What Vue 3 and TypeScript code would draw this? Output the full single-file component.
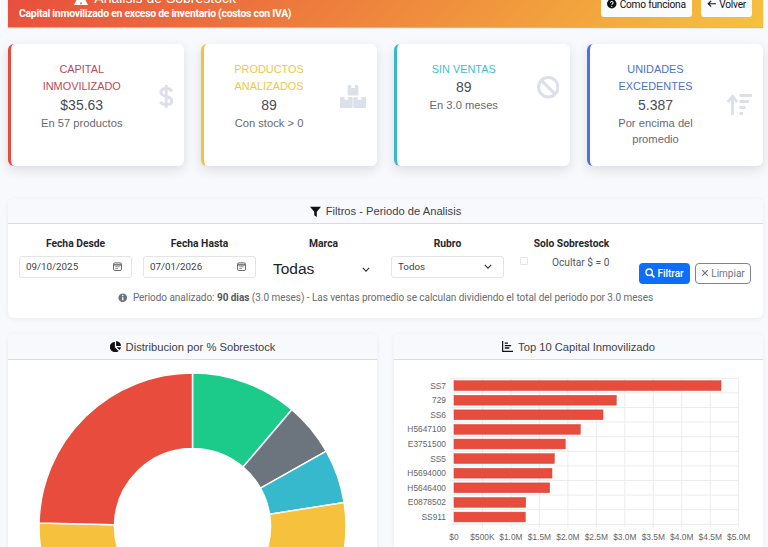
<script setup lang="ts">
interface Stat { title: string; value: string; sub: string; tone: string; icon: string }
const stats: Stat[] = [
  { title: 'CAPITAL INMOVILIZADO', value: '$35.63', sub: 'En 57 productos', tone: 'red', icon: 'dollar' },
  { title: 'PRODUCTOS ANALIZADOS', value: '89', sub: 'Con stock > 0', tone: 'yellow', icon: 'boxes' },
  { title: 'SIN VENTAS', value: '89', sub: 'En 3.0 meses', tone: 'cyan', icon: 'ban' },
  { title: 'UNIDADES EXCEDENTES', value: '5.387', sub: 'Por encima del promedio', tone: 'blue', icon: 'sort' },
]

const cx = 192.5, cy = 526.5, R = 153.5, r = 78
const pt = (rad: number, deg: number) => {
  const a = (deg * Math.PI) / 180
  return `${(cx + rad * Math.sin(a)).toFixed(2)} ${(cy - rad * Math.cos(a)).toFixed(2)}`
}
const seg = (a: number, b: number) => {
  const large = b - a > 180 ? 1 : 0
  return `M${pt(R, a)}A${R} ${R} 0 ${large} 1 ${pt(R, b)}L${pt(r, b)}A${r} ${r} 0 ${large} 0 ${pt(r, a)}Z`
}
const segments = [
  { d: seg(0, 40.4), c: '#1ccb8a' },
  { d: seg(40.4, 60.6), c: '#6c757d' },
  { d: seg(60.6, 81), c: '#36b9cc' },
  { d: seg(81, 271.3), c: '#f6c23e' },
  { d: seg(271.3, 360), c: '#e74c3c' },
]

const x0 = 454, x1 = 738.7, y0 = 378.3, rowH = 14.6
const bars = [
  ['SS7', 721], ['729', 616.3], ['SS6', 603], ['H5647100', 580.3], ['E3751500', 565.3],
  ['SS5', 554.3], ['H5694000', 552], ['H5646400', 549.7], ['E0878502', 525.7], ['SS911', 525.3],
].map(([label, end], i) => ({ label: label as string, end: end as number, y: y0 + rowH * i }))
const ticks = ['$0', '$500K', '$1.0M', '$1.5M', '$2.0M', '$2.5M', '$3.0M', '$3.5M', '$4.0M', '$4.5M', '$5.0M']
  .map((label, i) => ({ label, x: x0 + ((x1 - x0) * i) / 10 }))
const rows = Array.from({ length: 11 }, (_, i) => y0 + rowH * i)
</script>

<template>
  <div class="page">
    <header class="hero">
      <div class="hero-text">
        <h1>
          <svg class="warn" viewBox="0 0 14 14"><path fill="#fff" fill-rule="evenodd" d="M7 0l7 14H0zM6.2 11.6h1.6v1.6H6.2z" /></svg>
          Analisis de Sobrestock
        </h1>
        <p>Capital inmovilizado en exceso de inventario (costos con IVA)</p>
      </div>
      <div class="hero-actions">
        <button class="light">
          <svg viewBox="0 0 16 16" class="ic"><circle cx="8" cy="8" r="8" fill="#111" /><path d="M5.8 6.2a2.2 2.2 0 1 1 3.4 1.9c-.8.5-1.2.9-1.2 1.6" fill="none" stroke="#fff" stroke-width="1.7" /><circle cx="8" cy="12.3" r="1.1" fill="#fff" /></svg>
          Como funciona
        </button>
        <button class="light">
          <svg viewBox="0 0 16 16" class="ic"><path d="M15 8H2M7 3L2 8l5 5" fill="none" stroke="#111" stroke-width="1.8" /></svg>
          Volver
        </button>
      </div>
    </header>

    <section class="stats">
      <article v-for="s in stats" :key="s.title" class="stat" :class="s.tone">
        <div class="stat-row">
          <div class="stat-text">
            <h2>{{ s.title }}</h2>
            <div class="value">{{ s.value }}</div>
            <div class="sub">{{ s.sub }}</div>
          </div>
          <svg v-if="s.icon === 'dollar'" class="si" width="14.5" height="25" viewBox="0 0 14.5 25">
            <path d="M7.25 1v23" stroke="#dddfeb" stroke-width="2.8" />
            <path d="M13 7.5C11.8 5.3 9.8 4.6 7.2 4.6 4 4.6 1.9 6 1.9 8.3c0 5.4 10.9 3 10.9 8.6 0 2.4-2.2 3.7-5.5 3.7-2.6 0-4.800-.8-6-2.900" fill="none" stroke="#dddfeb" stroke-width="3" />
          </svg>
          <svg v-else-if="s.icon === 'boxes'" class="si" width="26" height="23" viewBox="0 0 26 23">
            <path fill="#dddfeb" d="M8.800 0h2.500v3h3.600V0h2.300a1.200 1.200 0 0 1 1.200 1.200v8.100a1.200 1.200 0 0 1-1.200 1.200H8.800a1.200 1.200 0 0 1-1.200-1.200V1.200A1.200 1.200 0 0 1 8.800 0z" />
            <path fill="#dddfeb" d="M1.200 12h3.300v3h3.600v-3h3.300a1.200 1.200 0 0 1 1.200 1.200v8.600a1.200 1.200 0 0 1-1.200 1.200H1.200A1.200 1.200 0 0 1 0 21.800v-8.600A1.200 1.200 0 0 1 1.200 12z" />
            <path fill="#dddfeb" d="M14.500 12h3.300v3h3.600v-3h3.400a1.200 1.200 0 0 1 1.200 1.200v8.600a1.200 1.200 0 0 1-1.200 1.200H14.500a1.200 1.200 0 0 1-1.200-1.200v-8.600a1.200 1.200 0 0 1 1.200-1.200z" />
          </svg>
          <svg v-else-if="s.icon === 'ban'" class="si" width="22.500" height="22.500" viewBox="0 0 22 22">
            <circle cx="11" cy="11" r="9.500" fill="none" stroke="#dddfeb" stroke-width="3" />
            <path d="M4.500 4.500l13 13" stroke="#dddfeb" stroke-width="3" />
          </svg>
          <svg v-else class="si" width="25" height="21" viewBox="0 0 25 21">
            <path d="M5.500 21V3M0.800 8l4.700-5.500L10.200 8" fill="none" stroke="#dddfeb" stroke-width="2.800" />
            <path d="M12.500 1.500H25M12.500 7.500H22M12.500 13.500H18.500M12.500 19.500H16" stroke="#dddfeb" stroke-width="2.800" />
          </svg>
        </div>
      </article>
    </section>

    <section class="card filters">
      <div class="card-head">
        <svg viewBox="0 0 12 12" class="hi"><path d="M0 .8h12L7.400 6.400V12L4.600 10V6.400z" fill="#111" /></svg>
        Filtros - Periodo de Analisis
      </div>
      <div class="filter-body">
        <div class="filter-grid">
          <div class="field">
            <label>Fecha Desde</label>
            <div class="control"><span>09/10/2025</span>
              <svg viewBox="0 0 10 10" class="cal"><rect x=".6" y="1" width="8.800" height="8.400" rx="1.400" fill="none" stroke="#555" stroke-width="1" /><path d="M1 3.200h8" stroke="#555" stroke-width="1.400" /><path d="M2.500 5.300h5M2.500 7.300h3" stroke="#777" stroke-width=".9" /></svg>
            </div>
          </div>
          <div class="field">
            <label>Fecha Hasta</label>
            <div class="control"><span>07/01/2026</span>
              <svg viewBox="0 0 10 10" class="cal"><rect x=".6" y="1" width="8.800" height="8.400" rx="1.400" fill="none" stroke="#555" stroke-width="1" /><path d="M1 3.200h8" stroke="#555" stroke-width="1.400" /><path d="M2.500 5.300h5M2.500 7.300h3" stroke="#777" stroke-width=".9" /></svg>
            </div>
          </div>
          <div class="field">
            <label>Marca</label>
            <div class="control bare"><span>Todas</span>
              <svg viewBox="0 0 10 6" class="chev"><path d="M1 1l4 4 4-4" fill="none" stroke="#333" stroke-width="1.400" /></svg>
            </div>
          </div>
          <div class="field">
            <label>Rubro</label>
            <div class="control"><span>Todos</span>
              <svg viewBox="0 0 10 6" class="chev"><path d="M1 1l4 4 4-4" fill="none" stroke="#333" stroke-width="1.400" /></svg>
            </div>
          </div>
          <div class="field">
            <label>Solo Sobrestock</label>
            <div class="check"><input type="checkbox" /><span>Ocultar $ = 0</span></div>
          </div>
          <div class="actions">
            <button class="primary">
              <svg viewBox="0 0 12 12" class="bi"><circle cx="5" cy="5" r="3.800" fill="none" stroke="#fff" stroke-width="1.700" /><path d="M8 8l3.300 3.300" stroke="#fff" stroke-width="2" /></svg>
              Filtrar
            </button>
            <button class="outline">
              <svg viewBox="0 0 10 10" class="bi x"><path d="M1.500 1.500l7 7M8.500 1.500l-7 7" stroke="#6c757d" stroke-width="1.500" /></svg>
              Limpiar
            </button>
          </div>
        </div>
        <p class="note">
          <svg viewBox="0 0 12 12" class="ni"><circle cx="6" cy="6" r="5.500" fill="#6c757d" /><path d="M6 5.400v3.600" stroke="#fff" stroke-width="1.600" /><circle cx="6" cy="3.300" r="1" fill="#fff" /></svg>
          Periodo analizado: <strong>90 dias</strong> (3.0 meses) - Las ventas promedio se calculan dividiendo el total del periodo por 3.0 meses
        </p>
      </div>
    </section>

    <section class="charts">
      <div class="card chart">
        <div class="card-head tall">
          <svg viewBox="0 0 12 12" class="hi pie"><path fill="#111" d="M5.300.8v5.900l4 4.100A5.700 5.700 0 1 1 5.300.8zM6.700 0A5.400 5.400 0 0 1 12 5.400H6.700zM7.300 6.700H12a5.500 5.500 0 0 1-1.700 3.200z" /></svg>
          Distribucion por % Sobrestock
        </div>
        <svg class="plot" viewBox="8 360 369 320" width="369" height="320">
          <path v-for="(p, i) in segments" :key="i" :d="p.d" :fill="p.c" stroke="#fff" stroke-width="1.500" />
        </svg>
      </div>
      <div class="card chart">
        <div class="card-head tall">
          <svg viewBox="0 0 12 12" class="hi"><path d="M.7 0v11.300H12" fill="none" stroke="#111" stroke-width="1.300" /><path d="M3 2.300h3.500M3 5h7M3 7.700h5" stroke="#111" stroke-width="1.500" /></svg>
          Top 10 Capital Inmovilizado
        </div>
        <svg class="plot" viewBox="394 360 369 320" width="369" height="320">
          <line v-for="t in ticks" :key="t.label" :x1="t.x" :x2="t.x" :y1="y0" y2="527.500" class="grid" />
          <line v-for="(y, i) in rows" :key="i" x1="449.500" :x2="x1" :y1="y" :y2="y" class="grid" />
          <g v-for="b in bars" :key="b.label">
            <rect :x="x0" :y="b.y + 2.400" :width="b.end - x0" height="9.800" fill="#e74c3c" stroke="#d8463a" stroke-width=".5" />
            <text :x="446" :y="b.y + 10.300" text-anchor="end" class="tick">{{ b.label }}</text>
          </g>
          <text v-for="t in ticks" :key="'x' + t.label" :x="t.x" y="539.800" text-anchor="middle" class="tick">{{ t.label }}</text>
        </svg>
      </div>
    </section>
  </div>
</template>

<style>
html, body { height: 547px; overflow: hidden; background: #f8f9fc; }
</style>

<style scoped>
.page {
  padding: 0 5px 0 8px;
  font-family: "Liberation Sans", Arial, sans-serif;
  color: #333;
}
button { font-family: Roboto, "Liberation Sans", sans-serif; cursor: pointer; }

.hero {
  margin-top: -16px;
  padding: 4.500px 11px 7.500px;
  display: flex;
  justify-content: space-between;
  align-items: flex-end;
  background: linear-gradient(135deg, #e74c3c, #f6c23e);
  color: #fff;
  box-shadow: 0 1px 1px rgba(120, 60, 0, .35);
}
.hero h1 {
  margin: 0;
  font-size: 14px;
  font-weight: 400;
  line-height: 18px;
  text-align: center;
  display: flex;
  justify-content: center;
  align-items: center;
  gap: 6px;
}
.warn { width: 14px; height: 14px; }
.hero p {
  margin: 0;
  font: 700 10.400px/13px Roboto, sans-serif;
  letter-spacing: -.25px;
}
.hero-actions { display: flex; gap: 9px; margin-bottom: 3px; }
.light {
  height: 25px;
  padding: 0 6px;
  background: #fafbfd;
  border: 0;
  border-radius: 3px;
  font-size: 10.200px;
  letter-spacing: -.25px;
  color: #111;
  display: flex;
  align-items: center;
  gap: 3px;
}
.ic { width: 9.500px; height: 9.500px; }

.stats {
  margin-top: 17px;
  display: grid;
  grid-template-columns: repeat(4, 176px);
  gap: 17px;
}
.stat {
  height: 122px;
  box-sizing: border-box;
  padding: 17px 11px 0 8px;
  background: #fff;
  border-left: 3px solid;
  border-radius: 6px;
  box-shadow: 0 4px 11px rgba(58, 59, 69, .14);
}
.stat.red { border-color: #e74a3b; }
.stat.yellow { border-color: #f6c23e; }
.stat.cyan { border-color: #36b9cc; }
.stat.blue { border-color: #4e73df; }
.stat-row { display: flex; align-items: center; gap: 14px; }
.stat-text { flex: 1; min-width: 0; text-align: center; }
.stat h2 { margin: 0; padding: 0 3px; font-size: 10.900px; font-weight: 400; line-height: 17.300px; }
.red h2 { color: #bd4a60; }
.yellow h2 { color: #eec64c; }
.cyan h2 { color: #46bcd0; }
.blue h2 { color: #4a72c8; }
.value { font-size: 14px; line-height: 19px; color: #4a4c55; }
.sub { font-size: 11.200px; line-height: 16.500px; color: #686a72; }
.si { flex: none; }

.card {
  background: #fff;
  border-radius: 6px;
  box-shadow: 0 1px 5px rgba(58, 59, 69, .07);
  overflow: hidden;
}
.card-head {
  height: 25px;
  box-sizing: border-box;
  background: #f8f9fc;
  border-bottom: 1px solid #d9dbe0;
  display: flex;
  justify-content: center;
  align-items: center;
  gap: 5px;
  font-size: 11.200px;
  color: #3f4147;
}
.card-head.tall { height: 26px; }
.hi { width: 11px; height: 11px; flex: none; }
.filters { margin-top: 33px; }
.filter-body { padding: 13px 11px; }
.filter-grid {
  display: grid;
  grid-template-columns: repeat(6, 1fr);
  column-gap: 11px;
}
.field label {
  display: block;
  text-align: center;
  font: 700 10.300px/14px Roboto, sans-serif;
  color: #26282c;
  margin-bottom: 4.500px;
}
.control {
  height: 22px;
  box-sizing: border-box;
  padding: 0 9px 0 6px;
  background: #fff;
  border: 1px solid #e2e4e8;
  border-radius: 3px;
  display: flex;
  justify-content: space-between;
  align-items: center;
  font: 400 9.800px Roboto, sans-serif;
  color: #3d3f44;
}
.control.bare {
  border: 0;
  font: 400 15.500px "Liberation Sans", sans-serif;
  color: #222;
  margin-top: 7px;
  padding: 0 8px 0 6px;
}
.cal { width: 9px; height: 9px; }
.chev { width: 8px; height: 5px; margin-right: 2px; }
.check {
  display: flex;
  align-items: flex-start;
  gap: 24px;
  padding-left: 5px;
  margin-top: 2px;
  font: 400 10.200px/14px Roboto, sans-serif;
  color: #55575c;
}
.check input {
  appearance: none;
  margin: 1px 0 0;
  width: 8px;
  height: 8px;
  border: 1px solid #e4e6ea;
  border-radius: 1px;
  box-sizing: border-box;
}
.actions {
  margin-top: 25.600px;
  display: flex;
  gap: 5px;
}
.actions button {
  height: 21.500px;
  box-sizing: border-box;
  border-radius: 4px;
  font-size: 10px;
  padding: 0;
  display: flex;
  justify-content: center;
  align-items: center;
  gap: 2px;
}
.primary { width: 51px; background: #0d6efd; color: #fff; border: 0; font-weight: 500; }
.outline { width: 56px; background: #fff; color: #6c757d; border: 1px solid #7d858c; }
.bi { width: 10px; height: 10px; }
.bi.x { width: 8px; height: 8px; }
.note {
  margin: 7px 0 0;
  text-align: center;
  font: 400 10px/14px Roboto, sans-serif;
  letter-spacing: -.04px;
  color: #686b70;
}
.note strong { font-weight: 700; color: #55575c; }
.ni { width: 9.500px; height: 9.500px; vertical-align: -1px; margin-right: 3px; }

.charts {
  margin-top: 16px;
  display: grid;
  grid-template-columns: repeat(2, 369px);
  gap: 17px;
}
.chart { height: 400px; }
.plot { display: block; }
.grid { stroke: #ececef; stroke-width: 1; }
.tick { font: 8.400px "Liberation Sans", sans-serif; fill: #666; }
</style>
